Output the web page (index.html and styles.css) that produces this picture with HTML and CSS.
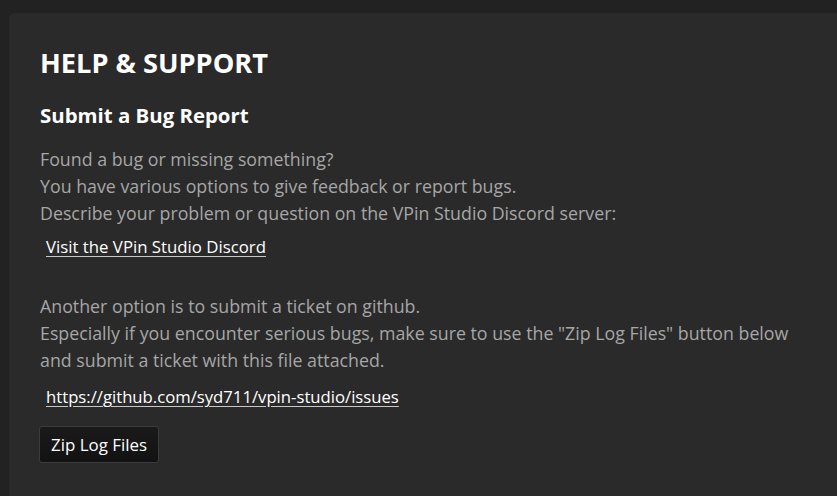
FILE: index.html
```html
<!DOCTYPE html>
<html>
<head>
<meta charset="utf-8">
<link rel="stylesheet" href="styles.css">
</head>
<body>
<div class="panel">
  <h1 class="title">HELP &amp; SUPPORT</h1>
  <h2 class="subtitle">Submit a Bug Report</h2>
  <div class="para">
    <div class="line">Found a bug or missing something?</div>
    <div class="line">You have various options to give feedback or report bugs.</div>
    <div class="line">Describe your problem or question on the VPin Studio Discord server:</div>
  </div>
  <a class="link" href="#">Visit the VPin Studio Discord</a>
  <div class="para para2">
    <div class="line">Another option is to submit a ticket on github.</div>
    <div class="line">Especially if you encounter serious bugs, make sure to use the "Zip Log Files" button below</div>
    <div class="line">and submit a ticket with this file attached.</div>
  </div>
  <a class="link link2" href="#">https://github.com/syd711/vpin-studio/issues</a>
  <div class="actions">
    <button class="btn">Zip Log Files</button>
  </div>
</div>
</body>
</html>
```
FILE: styles.css
```css
html, body {
  margin: 0;
  padding: 0;
  height: 100%;
  background: #222222;
  overflow: hidden;
}
body {
  padding: 13px 0 0 9px;
  box-sizing: border-box;
  font-family: "Open Sans", "Noto Sans", sans-serif;
}
.panel {
  background: #2a2a2a;
  border-top-left-radius: 6px;
  height: 100%;
  padding: 34px 0 0 31px;
  box-sizing: border-box;
  display: flex;
  flex-direction: column;
  align-items: flex-start;
}
.title {
  margin: 0;
  color: #ffffff;
  font-size: 27.2px;
  font-weight: 700;
  line-height: 34px;
  margin-top: -1px;
}
.subtitle {
  margin: 22px 0 0 0;
  color: #ffffff;
  font-size: 20.4px;
  font-weight: 700;
  line-height: 26px;
}
.para {
  margin-top: 18px;
  color: #a6a6a6;
  font-size: 17.8px;
  line-height: 27px;
  white-space: nowrap;
}
.para2 {
  margin-top: 35px;
}
.link {
  margin: 9px 0 0 6px;
  color: #ffffff;
  font-size: 16.8px;
  line-height: 22px;
  text-decoration: underline;
  text-decoration-color: #c8c8c8;
  text-underline-offset: 3px;
}
.link2 {
  margin-top: 12px;
  font-size: 16.7px;
}
.actions {
  margin-top: 18px;
  margin-left: -1px;
}
.btn {
  background: linear-gradient(#1a1a1a, #121212);
  color: #ffffff;
  border: 1px solid #3c3c3c;
  border-radius: 3px;
  font-family: inherit;
  font-size: 16.9px;
  padding: 0 11px;
  height: 37px;
}
```
